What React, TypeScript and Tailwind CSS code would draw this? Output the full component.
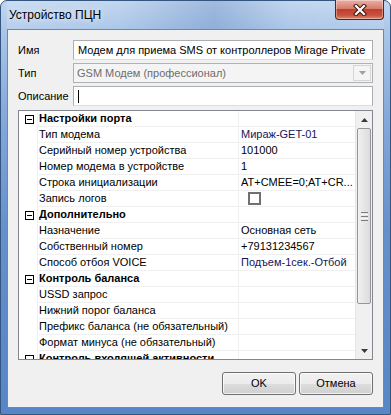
import type { ReactNode } from "react";

type Row =
  | { kind: "head"; label: string }
  | { kind: "item"; label: string; value?: string; navy?: boolean; check?: boolean };

const rows: Row[] = [
  { kind: "head", label: "Настройки порта" },
  { kind: "item", label: "Тип модема", value: "Мираж-GET-01", navy: true },
  { kind: "item", label: "Серийный номер устройства", value: "101000" },
  { kind: "item", label: "Номер модема в устройстве", value: "1" },
  { kind: "item", label: "Строка инициализации", value: "AT+CMEE=0;AT+CR..." },
  { kind: "item", label: "Запись логов", check: true },
  { kind: "head", label: "Дополнительно" },
  { kind: "item", label: "Назначение", value: "Основная сеть" },
  { kind: "item", label: "Собственный номер", value: "+79131234567" },
  { kind: "item", label: "Способ отбоя VOICE", value: "Подъем-1сек.-Отбой", navy: true },
  { kind: "head", label: "Контроль баланса" },
  { kind: "item", label: "USSD запрос" },
  { kind: "item", label: "Нижний порог баланса" },
  { kind: "item", label: "Префикс баланса (не обязательный)" },
  { kind: "item", label: "Формат минуса (не обязательный)" },
  { kind: "head", label: "Контроль входящей активности" },
];

function MinusBox() {
  return (
    <svg width="9" height="9" viewBox="0 0 9 9" className="block">
      <rect x="0.5" y="0.5" width="8" height="8" fill="#fff" stroke="#000" />
      <path d="M2 4.5h5" stroke="#000" />
    </svg>
  );
}

function CloseButton() {
  return (
    <div className="-mt-px flex h-[20px] w-[49px] items-center justify-center rounded-b-[4px] border border-t-0 border-[#5a231d] bg-[linear-gradient(180deg,#e9b1a7_0%,#d87c6c_45%,#c0402d_50%,#c8523d_80%,#e08a6e_100%)] shadow-[inset_0_0_0_1px_rgba(255,255,255,0.35)]">
      <svg width="14" height="12" viewBox="0 0 14 12">
        <path d="M3 2l8 8M11 2l-8 8" stroke="#3b1410" strokeWidth="4.2" strokeLinecap="square" />
        <path d="M3 2l8 8M11 2l-8 8" stroke="#fff" strokeWidth="2.2" strokeLinecap="square" />
      </svg>
    </div>
  );
}

function Field({ label, children }: { label: string; children: ReactNode }) {
  return (
    <div className="flex h-[20px] items-center">
      <div className="w-[55px] text-[11px] text-black">{label}</div>
      {children}
    </div>
  );
}

function Scrollbar() {
  return (
    <div className="flex w-[17px] flex-col bg-[#f0f0f0] border-l border-[#e6e6e6]">
      <div className="flex h-[17px] items-center justify-center">
        <svg width="7" height="4" viewBox="0 0 7 4">
          <path d="M0 4L3.5 0L7 4Z" fill="#3a3a3a" />
        </svg>
      </div>
      <div className="mx-[1px] flex h-[176px] items-center justify-center rounded-[2px] border border-[#979797] bg-[linear-gradient(90deg,#f1f1f1,#e6e6e6_50%,#dcdcdc)]">
        <div className="flex flex-col gap-[1px]">
          <div className="h-px w-[7px] bg-[#7d7d7d]" />
          <div className="h-px w-[7px] bg-[#f8f8f8]" />
          <div className="h-px w-[7px] bg-[#7d7d7d]" />
          <div className="h-px w-[7px] bg-[#f8f8f8]" />
          <div className="h-px w-[7px] bg-[#7d7d7d]" />
        </div>
      </div>
      <div className="flex-1" />
      <div className="flex h-[17px] items-center justify-center">
        <svg width="7" height="4" viewBox="0 0 7 4">
          <path d="M0 0L3.5 4L7 0Z" fill="#3a3a3a" />
        </svg>
      </div>
    </div>
  );
}

function PropertyGrid() {
  return (
    <div className="mt-[4px] flex h-[250px] border border-[#828790] bg-white">
      <div className="flex-1 overflow-hidden">
        {rows.map((r, i) => (
          <div key={i} className="flex h-[16px]">
            <div className="flex w-[18px] items-center justify-center pl-[2px]">
              {r.kind === "head" ? <MinusBox /> : null}
            </div>
            <div
              className={
                r.kind === "head"
                  ? "w-[201px] truncate border-b border-l border-[#f0f0f0] pl-[1px] text-[11px] font-bold leading-[15px] text-black"
                  : "w-[201px] truncate border-b border-l border-[#f0f0f0] pl-[1px] text-[11px] leading-[15px] text-black"
              }
            >
              {r.label}
            </div>
            <div className="flex-1 truncate border-b border-l border-[#f0f0f0] pl-[2px] text-[11px] leading-[15px]">
              {r.kind === "item" && r.check ? (
                <div className="ml-[7px] mt-px h-[13px] w-[13px] border-2 border-[#707070] bg-white" />
              ) : r.kind === "item" && r.value ? (
                <span className={r.navy ? "text-[#15155a]" : "text-black"}>{r.value}</span>
              ) : null}
            </div>
          </div>
        ))}
      </div>
      <Scrollbar />
    </div>
  );
}

function Button({ children }: { children: ReactNode }) {
  return (
    <div className="flex h-[23px] w-[74px] items-center justify-center rounded-[3px] border border-[#707070] bg-[linear-gradient(180deg,#f2f2f2_0%,#ebebeb_50%,#dddddd_51%,#cfcfcf_100%)] text-[11px] text-black shadow-[inset_0_0_0_1px_rgba(255,255,255,0.7)]">
      {children}
    </div>
  );
}

export default function App() {
  return (
    <div className="h-[415px] w-[391px] font-['Liberation_Sans',Arial,sans-serif]">
      <div className="flex h-full w-full flex-col rounded-t-[7px] border border-[#34557f] bg-[linear-gradient(180deg,#c2d7ef_0px,#aac6e8_30px,#86aadb_110px,#6590cb_230px,#5686c7_100%)] px-[6px] pb-[6px]">
        <div className="flex h-[28px] items-start justify-between bg-[linear-gradient(90deg,rgba(255,255,255,0.15)_0%,rgba(255,255,255,0)_30%,rgba(60,100,170,0.25)_55%,rgba(255,255,255,0)_75%,rgba(255,255,255,0.1)_100%)]">
          <div className="mt-[7px] pl-[2px] text-[12px] leading-[15px] text-black [text-shadow:0_0_6px_rgba(255,255,255,0.9)]">
            Устройство ПЦН
          </div>
          <CloseButton />
        </div>
        <div className="flex flex-1 flex-col border border-[#6d88ad] bg-[#f0f0f0] px-[10px] pt-[10px]">
          <div className="flex flex-col gap-[3px]">
            <Field label="Имя">
              <div className="flex h-[20px] flex-1 items-center border border-[#abadb3] border-b-[#dadde3] bg-white pl-[4px] text-[11px] text-black">
                Модем для приема SMS от контроллеров Mirage Private
              </div>
            </Field>
            <Field label="Тип">
              <div className="flex h-[20px] flex-1 items-center justify-between border border-[#adb2b5] bg-[#f4f4f4] pl-[3px] pr-px text-[11px] text-[#6d6d6d]">
                <span>GSM Модем (профессионал)</span>
                <div className="flex h-[16px] w-[18px] items-center justify-center border border-[#d5d5d5] bg-[#f4f4f4]">
                  <svg width="7" height="4" viewBox="0 0 7 4">
                    <path d="M0 0L3.5 4L7 0Z" fill="#a0a0a0" />
                  </svg>
                </div>
              </div>
            </Field>
            <Field label="Описание">
              <div className="flex h-[20px] flex-1 items-center border border-[#abadb3] border-b-[#dadde3] bg-white pl-[4px]">
                <div className="h-[13px] w-px bg-black" />
              </div>
            </Field>
          </div>
          <PropertyGrid />
          <div className="mt-[12px] flex justify-end gap-[3px]">
            <Button>OK</Button>
            <Button>Отмена</Button>
          </div>
        </div>
      </div>
    </div>
  );
}
